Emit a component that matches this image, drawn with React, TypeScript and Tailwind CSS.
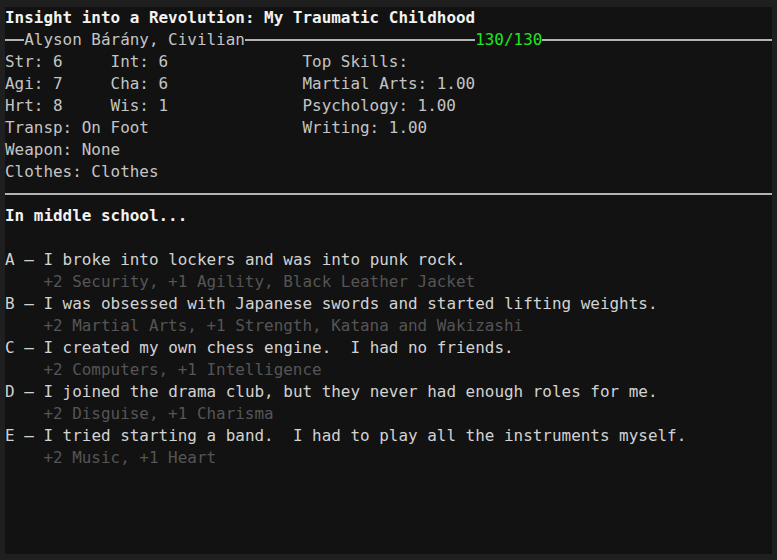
const mono = "font-['DejaVu_Sans_Mono','Liberation_Mono',monospace]";

function Rule() {
  return <div className="h-[2px] bg-[#b4b4b4]" />;
}

const options = [
  { key: 'A', text: 'I broke into lockers and was into punk rock.', effect: '+2 Security, +1 Agility, Black Leather Jacket' },
  { key: 'B', text: 'I was obsessed with Japanese swords and started lifting weights.', effect: '+2 Martial Arts, +1 Strength, Katana and Wakizashi' },
  { key: 'C', text: 'I created my own chess engine.  I had no friends.', effect: '+2 Computers, +1 Intelligence' },
  { key: 'D', text: 'I joined the drama club, but they never had enough roles for me.', effect: '+2 Disguise, +1 Charisma' },
  { key: 'E', text: 'I tried starting a band.  I had to play all the instruments myself.', effect: '+2 Music, +1 Heart' },
];

const stats = [
  ['Str: 6', 'Int: 6', 'Top Skills:'],
  ['Agi: 7', 'Cha: 6', 'Martial Arts: 1.00'],
  ['Hrt: 8', 'Wis: 1', 'Psychology: 1.00'],
  ['Transp: On Foot', '', 'Writing: 1.00'],
  ['Weapon: None', '', ''],
  ['Clothes: Clothes', '', ''],
];

export default function App() {
  return (
    <div className="w-[777px] h-[560px] bg-[#1f1f1f] pt-[7px] pl-[5px] pr-[5px] pb-[6px] flex">
      <div className={`flex-1 bg-[#121212] text-[15.95px] leading-[22px] text-[#c4c4c4] whitespace-pre ${mono}`}>
        <div className="font-bold text-[#f2f2f2]">Insight into a Revolution: My Traumatic Childhood</div>

        <div className="flex items-center h-[22px]">
          <div className="w-[49ch] flex items-center">
            <div className="w-[2ch]"><Rule /></div>
            <span>Alyson Bárány, Civilian</span>
            <div className="flex-1"><Rule /></div>
          </div>
          <span className="text-[#1ee61e]">130/130</span>
          <div className="flex-1"><Rule /></div>
        </div>

        {stats.map((row, i) => (
          <div key={i} className="flex h-[22px]">
            <span className="w-[11ch]">{row[0]}</span>
            <span className="w-[20ch]">{row[1]}</span>
            <span>{row[2]}</span>
          </div>
        ))}

        <div className="h-[22px] flex items-center">
          <div className="flex-1"><Rule /></div>
        </div>

        <div className="font-bold text-[#f2f2f2]">In middle school...</div>
        <div className="h-[22px]" />

        {options.map((o) => (
          <div key={o.key}>
            <div className="text-[#d2d2d2]">{o.key} – {o.text}</div>
            <div className="pl-[4ch] text-[#555555]">{o.effect}</div>
          </div>
        ))}
      </div>
    </div>
  );
}
